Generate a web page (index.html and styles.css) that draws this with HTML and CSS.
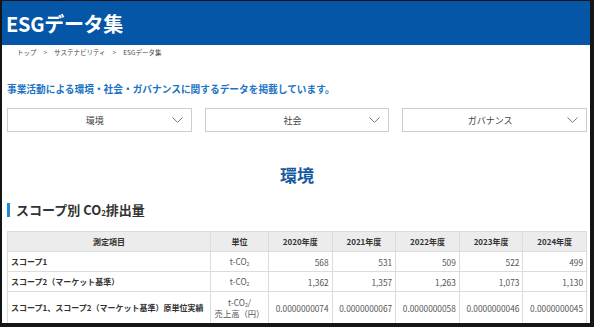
FILE: index.html
```html
<!DOCTYPE html>
<html lang="ja">
<head>
	<meta charset="UTF-8">
	<title>ESGデータ集</title>
	<link rel="stylesheet" href="styles.css">
</head>
<body>
<div class="frame">
	<div class="page-head">
		<h1>ESGデータ集</h1>
	</div>
	<ul class="crumbs">
		<li>トップ</li>
		<li class="sep">&gt;</li>
		<li>サステナビリティ</li>
		<li class="sep">&gt;</li>
		<li>ESGデータ集</li>
	</ul>

	<div class="content">
		<p class="lead">事業活動による環境・社会・ガバナンスに関するデータを掲載しています。</p>

		<div class="tabs">
			<div class="tab">環境
				<svg class="chev" width="11" height="6" viewBox="0 0 11 6"><polyline points="0.5,0.5 5.5,5.3 10.5,0.5" fill="none" stroke="#777" stroke-width="1"/></svg>
			</div>
			<div class="tab">社会
				<svg class="chev" width="11" height="6" viewBox="0 0 11 6"><polyline points="0.5,0.5 5.5,5.3 10.5,0.5" fill="none" stroke="#777" stroke-width="1"/></svg>
			</div>
			<div class="tab">ガバナンス
				<svg class="chev" width="11" height="6" viewBox="0 0 11 6"><polyline points="0.5,0.5 5.5,5.3 10.5,0.5" fill="none" stroke="#777" stroke-width="1"/></svg>
			</div>
		</div>

		<h2 class="cat">環境</h2>

		<h3 class="sec">スコープ別 CO<sub>2</sub>排出量</h3>

		<table class="data">
			<tr>
				<th class="c-item">測定項目</th>
				<th class="c-unit">単位</th>
				<th>2020年度</th>
				<th>2021年度</th>
				<th>2022年度</th>
				<th>2023年度</th>
				<th>2024年度</th>
			</tr>
			<tr>
				<td class="label">スコープ1</td>
				<td class="unit">t-CO<sub>2</sub></td>
				<td>568</td>
				<td>531</td>
				<td>509</td>
				<td>522</td>
				<td>499</td>
			</tr>
			<tr>
				<td class="label">スコープ2（マーケット基準）</td>
				<td class="unit">t-CO<sub>2</sub></td>
				<td>1,362</td>
				<td>1,357</td>
				<td>1,263</td>
				<td>1,073</td>
				<td>1,130</td>
			</tr>
			<tr class="tall">
				<td class="label">スコープ1、スコープ2（マーケット基準）原単位実績</td>
				<td class="unit">t-CO<sub>2</sub>/<br>売上高（円）</td>
				<td>0.0000000074</td>
				<td>0.0000000067</td>
				<td>0.0000000058</td>
				<td>0.0000000046</td>
				<td>0.0000000045</td>
			</tr>
		</table>
	</div>
</div>
</body>
</html>
```

FILE: styles.css
```css
html, body {
	margin: 0;
	padding: 0;
	background: #fff;
}
body {
	font-family: "Noto Sans CJK JP", "Noto Sans", sans-serif;
	color: #333;
}
.frame {
	box-sizing: border-box;
	width: 594px;
	height: 327px;
	overflow: hidden;
	border-style: solid;
	border-color: #151515;
	border-width: 1px 4px 4px 2px;
}
.page-head {
	background: #0656a8;
	height: 44px;
	padding-left: 4px;
	display: flex;
	align-items: center;
}
.page-head h1 {
	margin: 0;
	color: #fff;
	font-size: 20px;
	font-weight: bold;
	letter-spacing: -0.3px;
}
.crumbs {
	list-style: none;
	margin: 0;
	padding: 2px 0 0 15px;
	display: flex;
	gap: 7px;
	font-size: 6.5px;
	line-height: 10px;
	color: #444;
}
.crumbs .sep {
	color: #666;
}
.content {
	padding: 0 3px 0 5px;
}
.lead {
	margin: 25px 0 0;
	font-size: 9.7px;
	line-height: 14px;
	font-weight: bold;
	color: #1b73c4;
}
.tabs {
	display: flex;
	gap: 13px;
	margin-top: 12px;
}
.tab {
	flex: 1;
	height: 24px;
	box-sizing: border-box;
	border: 1.5px solid #cdcdcd;
	display: flex;
	align-items: center;
	justify-content: center;
	padding: 0 9px 0 0;
	position: relative;
	font-size: 9px;
	color: #444;
}
.chev {
	position: absolute;
	right: 8px;
	top: 8px;
}
.cat {
	margin: 32px 0 0;
	text-align: center;
	font-size: 17px;
	line-height: 22px;
	color: #17599f;
}
.sec {
	margin: 17px 0 0;
	padding-left: 6px;
	border-left: 3.5px solid #1c8ad6;
	font-size: 13px;
	line-height: 14px;
	color: #333;
}
sub {
	font-size: 0.6em;
	vertical-align: -0.15em;
	line-height: 0;
}
.data {
	margin-top: 14px;
	width: 580px;
	border-collapse: collapse;
	table-layout: fixed;
	font-size: 8px;
}
.data th, .data td {
	border: 1px solid #dcdcdc;
	height: 19px;
	padding: 0 3px;
}
.data th {
	background: #ececec;
	font-weight: bold;
	color: #333;
	text-align: center;
}
.data td {
	text-align: right;
	color: #555;
	font-size: 8.3px;
}
.data .c-item {
	width: 196px;
}
.data .c-unit {
	width: 51px;
}
.data td.label {
	text-align: left;
	font-weight: bold;
	color: #333;
	font-size: 8px;
}
.data td.unit {
	text-align: center;
	line-height: 11px;
}
.data tr.tall td {
	height: 31px;
}
```
